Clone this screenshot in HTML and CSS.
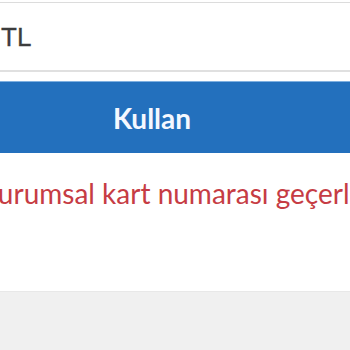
FILE: index.html
```html
<!DOCTYPE html>
<html lang="tr">
<head>
<meta charset="utf-8">
<link rel="stylesheet" href="styles.css">
</head>
<body>
<div class="page">
  <div class="form">
    <div class="field"><span class="field-text">TL</span></div>
    <button class="btn">Kullan</button>
    <p class="error">Kurumsal kart numarası geçerli değil</p>
  </div>
  <div class="footer"></div>
</div>
</body>
</html>
```
FILE: styles.css
```css
html, body {
  margin: 0;
  padding: 0;
  background: #ffffff;
}
.page {
  width: 350px;
  height: 350px;
  overflow: hidden;
  display: flex;
  flex-direction: column;
}
.form {
  padding-top: 2px;
  height: 291px;
  box-sizing: border-box;
  margin-left: -20px;
  margin-right: -20px;
}
.field {
  height: 70px;
  border-top: 1px solid #dcdcdc;
  border-bottom: 2px solid #e0e0e0;
  box-sizing: border-box;
  display: flex;
  align-items: center;
  padding-left: 21px;
}
.field-text {
  font-family: "Liberation Sans", Arial, sans-serif;
  font-size: 26px;
  color: #3c3c3c;
  padding-top: 2px;
  -webkit-text-stroke: 0.3px #3c3c3c;
}
.btn {
  display: block;
  width: 100%;
  margin-top: 9px;
  height: 72px;
  border: none;
  border-top: 1px solid #7fb0e0;
  background: #2370bd;
  color: #f4f8ff;
  font-family: Lato, "Open Sans", sans-serif;
  font-weight: 700;
  font-size: 28px;
  padding: 0 46px 0 0;
}
.error {
  margin: 0;
  margin-top: 23px;
  margin-left: 0;
  white-space: nowrap;
  font-family: Lato, "Open Sans", sans-serif;
  font-size: 28px;
  color: #c63c44;
}
.footer {
  flex: 1;
  background: #f0f0f0;
  border-top: 1px solid #e8e8e8;
}
```
